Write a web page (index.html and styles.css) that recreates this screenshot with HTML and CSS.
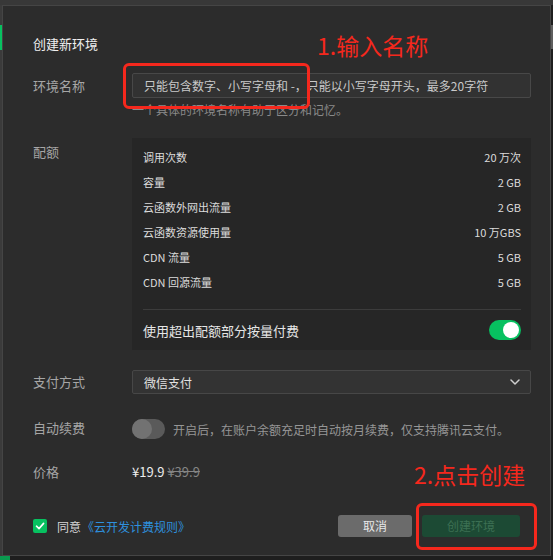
FILE: index.html
```html
<!DOCTYPE html>
<html lang="zh-CN">
<head>
<meta charset="utf-8">
<title>创建新环境</title>
<link rel="stylesheet" href="styles.css">
</head>
<body>
<div class="topbar"></div>
<div class="stage">
  <div class="gutter gutter-left"><div class="gutter-mark"></div></div>
  <div class="dialog">
    <div class="title">创建新环境</div>

    <div class="row row-name">
      <div class="label label-name">环境名称</div>
      <div class="control">
        <div class="input"><span class="placeholder">只能包含数字、小写字母和 -，只能以小写字母开头，最多20字符</span></div>
        <div class="hint">一个具体的环境名称有助于区分和记忆。</div>
      </div>
    </div>

    <div class="row row-quota">
      <div class="label label-quota">配额</div>
      <div class="panel">
        <div class="qrow"><span>调用次数</span><span>20 万次</span></div>
        <div class="qrow"><span>容量</span><span>2 GB</span></div>
        <div class="qrow"><span>云函数外网出流量</span><span>2 GB</span></div>
        <div class="qrow"><span>云函数资源使用量</span><span>10 万GBS</span></div>
        <div class="qrow"><span>CDN 流量</span><span>5 GB</span></div>
        <div class="qrow"><span>CDN 回源流量</span><span>5 GB</span></div>
        <div class="divider"></div>
        <div class="toggle-row">
          <span>使用超出配额部分按量付费</span>
          <span class="switch switch-on"><span class="knob"></span></span>
        </div>
      </div>
    </div>

    <div class="row row-pay">
      <div class="label label-line24">支付方式</div>
      <div class="select">
        <span>微信支付</span>
        <svg class="chevron" width="10" height="6" viewBox="0 0 10 6"><polyline points="1,1 5,5 9,1" fill="none" stroke="#cfcfcf" stroke-width="1.5" stroke-linecap="round" stroke-linejoin="round"/></svg>
      </div>
    </div>

    <div class="row row-auto">
      <div class="label label-line20">自动续费</div>
      <div class="auto">
        <span class="switch switch-off"><span class="knob"></span></span>
        <span class="auto-text">开启后，在账户余额充足时自动按月续费，仅支持腾讯云支付。</span>
      </div>
    </div>

    <div class="row row-price">
      <div class="label label-line20">价格</div>
      <div class="price"><span class="price-now">¥19.9</span> <span class="price-old">¥39.9</span></div>
    </div>

    <div class="footer">
      <div class="agree">
        <span class="checkbox">
          <svg width="14" height="14" viewBox="0 0 14 14"><polyline points="3.5,7.2 6,9.6 10.6,4.4" fill="none" stroke="#ffffff" stroke-width="1.6" stroke-linecap="round" stroke-linejoin="round"/></svg>
        </span>
        <span class="agree-text">同意</span>
        <span class="link">《云开发计费规则》</span>
      </div>
      <div class="buttons">
        <span class="btn btn-cancel">取消</span>
        <span class="btn btn-create">创建环境</span>
      </div>
    </div>

    <div class="note note-1">1.输入名称</div>
    <div class="mark mark-1"></div>
    <div class="note note-2">2.点击创建</div>
    <div class="mark mark-2"></div>
  </div>
  <div class="gutter gutter-right"><div class="gutter-thumb"></div></div>
</div>
<div class="bottombar"><div class="bottom-mark"></div></div>
</body>
</html>
```

FILE: styles.css
```css
* { box-sizing: border-box; }
html, body { margin: 0; padding: 0; }
body {
  width: 553px;
  height: 560px;
  overflow: hidden;
  background: #222222;
  font-family: "Noto Sans CJK SC", "Noto Sans", sans-serif;
}
.topbar { height: 5px; background: #383838; }
.stage { display: flex; }
.gutter { width: 2px; flex: none; }
.gutter-left { background: #3b3b3b; }
.gutter-mark { margin-top: 20px; height: 25px; background: #07c160; }
.gutter-right { background: #1e1e1e; }
.gutter-thumb { margin-top: 20px; height: 24px; background: #5e5e5e; }

.bottombar { height: 4px; background: #1e1e1e; }
.bottom-mark { width: 10px; height: 4px; background: #0a9a4f; }

.dialog {
  position: relative;
  width: 549px;
  flex: none;
  background: #2c2c2c;
  border: 1px solid #454545;
  padding: 28px 19px 18px 30px;
}
.title { font-size: 13px; line-height: 20px; color: #f0f0f0; }

.row { display: grid; grid-template-columns: 99px 1fr; }
.label { font-size: 13px; color: #a6a6a6; }

.row-name { margin-top: 19px; }
.label-name { line-height: 25px; }
.input {
  height: 25px;
  background: #323232;
  border: 1px solid #484848;
  border-radius: 2px;
  padding: 0 11px;
  display: flex;
  align-items: center;
}
.placeholder { font-size: 12px; color: #c9c9c9; white-space: nowrap; }
.hint { margin-top: 4px; font-size: 12px; line-height: 16px; color: #8a8a8a; }

.row-quota { margin-top: 20px; }
.label-quota { padding-top: 5px; line-height: 18px; }
.panel { background: #262626; padding: 6px 10px 0 11px; }
.qrow {
  height: 25px;
  display: flex;
  align-items: center;
  justify-content: space-between;
  font-size: 11px;
  color: #dcdcdc;
}
.divider { margin-top: 15px; height: 1px; background: #3c3c3c; }
.toggle-row {
  height: 40px;
  display: flex;
  align-items: center;
  justify-content: space-between;
  font-size: 13px;
  color: #e6e6e6;
}

.switch { position: relative; display: inline-block; height: 20px; border-radius: 10px; flex: none; }
.switch-on { width: 32px; background: #07c160; }
.switch-on .knob { position: absolute; top: 2px; right: 2px; width: 16px; height: 16px; border-radius: 50%; background: #ffffff; }
.switch-off { width: 33px; background: #5a5a5a; }
.switch-off .knob { position: absolute; top: 0; left: 0; width: 20px; height: 20px; border-radius: 50%; background: #727272; }

.row-pay { margin-top: 20px; }
.label-line24 { line-height: 24px; }
.select {
  height: 24px;
  background: #333333;
  border: 1px solid #474747;
  border-radius: 2px;
  padding: 0 10px 0 11px;
  display: flex;
  align-items: center;
  justify-content: space-between;
  font-size: 12px;
  color: #e2e2e2;
}
.chevron { display: block; }

.row-auto { margin-top: 25px; }
.label-line20 { line-height: 20px; }
.row-auto .label-line20 { line-height: 18px; }
.auto { display: flex; align-items: center; gap: 8px; height: 20px; }
.auto-text { font-size: 12px; color: #969696; white-space: nowrap; }

.row-price { margin-top: 23px; }
.price { font-size: 13px; line-height: 20px; }
.price-now { color: #eeeeee; }
.price-old { color: #858585; text-decoration: line-through; }

.footer {
  margin-top: 33px;
  display: flex;
  align-items: center;
  justify-content: space-between;
  padding-right: 11px;
  height: 22px;
}
.agree { display: flex; align-items: center; font-size: 12px; }
.checkbox {
  width: 14px; height: 14px; border-radius: 2px; background: #07c160;
  display: inline-flex; margin-right: 10px;
}
.checkbox svg { display: block; }
.agree-text { color: #d6d6d6; }
.link { color: #2e90de; margin-left: 1px; }
.buttons { display: flex; gap: 10px; }
.btn {
  height: 22px;
  line-height: 22px;
  font-size: 12px;
  border-radius: 3px;
  text-align: center;
}
.btn-cancel { width: 74px; background: #6b6b6b; color: #e8e8e8; }
.btn-create { width: 98px; background: #1c4a34; color: #3c7053; }

.note {
  position: absolute;
  font-size: 23px;
  line-height: 23px;
  color: #f5281d;
  white-space: nowrap;
}
.note-1 { left: 314px; top: 28px; }
.note-2 { left: 411px; top: 457px; }
.mark {
  position: absolute;
  border: 3px solid #f5281d;
  border-radius: 6px;
}
.mark-1 { left: 120px; top: 57px; width: 187px; height: 46px; }
.mark-2 { left: 413px; top: 497px; width: 121px; height: 47px; }
```
